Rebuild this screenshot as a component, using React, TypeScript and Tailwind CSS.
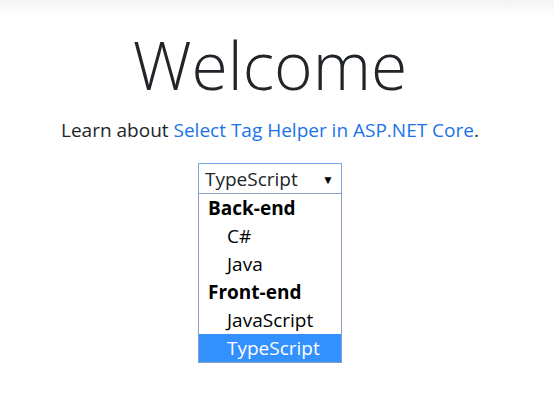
const groups = [
  { label: "Back-end", items: ["C#", "Java"] },
  { label: "Front-end", items: ["JavaScript", "TypeScript"] },
];

export default function App() {
  const selected = "TypeScript";
  return (
    <div className="w-[554px] h-[399px] bg-white text-[#212529] font-['Open_Sans','Noto_Sans',sans-serif] overflow-hidden">
      <div className="h-[16px] bg-gradient-to-b from-[#f3f3f3] to-white" />
      <div className="flex flex-col items-center pr-[14px]">
        <h1 className="mt-[8px] text-[66px] leading-[80px] font-light">Welcome</h1>
        <p className="mt-[12px] text-[19px] leading-[28px]">
          Learn about <a href="#" className="text-[#1a73e8]">Select Tag Helper in ASP.NET Core</a>.
        </p>
        <div className="relative mt-[19px] w-[144px]">
          <div className="flex h-[31px] items-center justify-between border border-[#7aa5e6] pl-[6px] pr-[7px] pt-[2px] text-[19px]">
            <span>{selected}</span>
            <span className="text-[12px] text-black">▼</span>
          </div>
          <div className="absolute left-0 top-[30px] w-[144px] border border-[#8a9fc2] bg-white text-[19px] text-black">
            {groups.map((g) => (
              <div key={g.label}>
                <div className="h-[28px] leading-[28px] px-[9px] font-bold">{g.label}</div>
                {g.items.map((it) => (
                  <div
                    key={it}
                    className={
                      it === selected
                        ? "h-[28px] leading-[28px] pl-[28px] bg-[#3390ff] text-white"
                        : "h-[28px] leading-[28px] pl-[28px]"
                    }
                  >
                    {it}
                  </div>
                ))}
              </div>
            ))}
          </div>
        </div>
      </div>
    </div>
  );
}
